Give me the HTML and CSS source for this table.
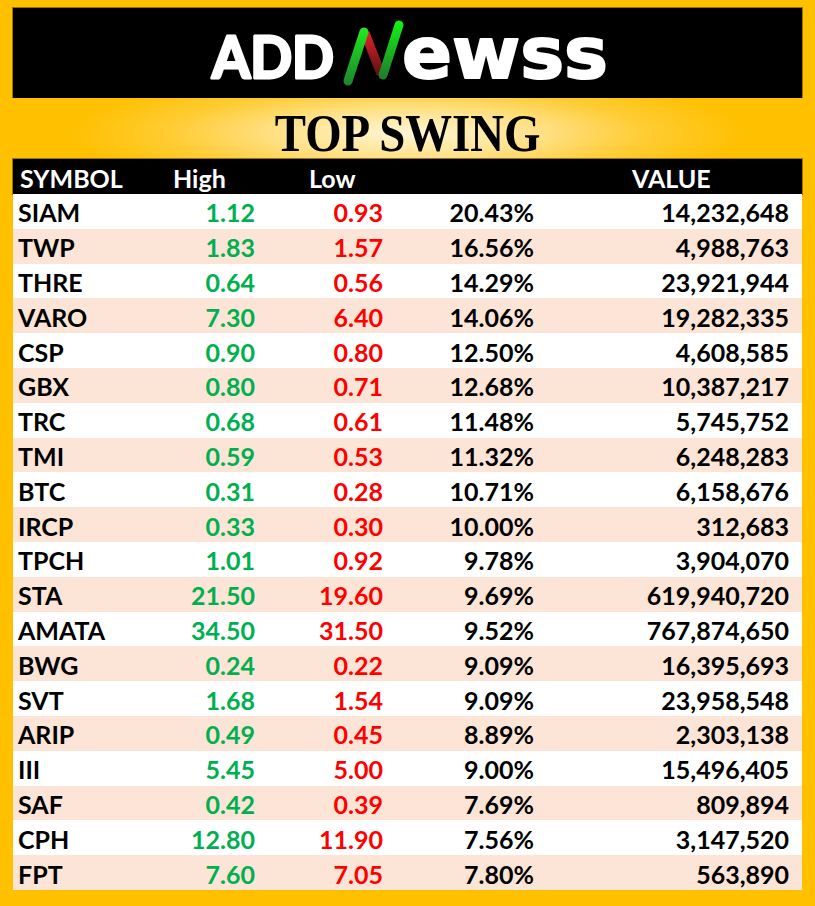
FILE: index.html
```html
<!DOCTYPE html>
<html lang="en">
<head>
<meta charset="utf-8">
<title>Top Swing</title>
<link rel="stylesheet" href="styles.css">
</head>
<body>
<div class="frame">
  <div class="logo">
    <svg class="logo-svg" width="789" height="90" viewBox="0 0 789 90" xmlns="http://www.w3.org/2000/svg">
      <defs>
        <linearGradient id="g1" gradientUnits="userSpaceOnUse" x1="0" y1="22" x2="0" y2="74">
          <stop offset="0" stop-color="#1ee81e"/>
          <stop offset="1" stop-color="#1c8a2c"/>
        </linearGradient>
        <linearGradient id="g2" gradientUnits="userSpaceOnUse" x1="0" y1="15" x2="0" y2="68">
          <stop offset="0" stop-color="#12f012"/>
          <stop offset="1" stop-color="#1f7f2a"/>
        </linearGradient>
        <linearGradient id="r1" gradientUnits="userSpaceOnUse" x1="0" y1="24" x2="0" y2="66">
          <stop offset="0" stop-color="#e3222a"/>
          <stop offset="1" stop-color="#5e1212"/>
        </linearGradient>
      </defs>
      <text class="logo-text" x="199" y="70" font-size="58" textLength="122" lengthAdjust="spacingAndGlyphs">ADD</text>
      <line x1="352" y1="25" x2="368" y2="66" stroke="url(#r1)" stroke-width="9"/>
      <line x1="335" y1="73" x2="351" y2="24" stroke="url(#g1)" stroke-width="9" stroke-linecap="round"/>
      <line x1="370" y1="67" x2="386" y2="17" stroke="url(#g2)" stroke-width="9" stroke-linecap="round"/>
      <text class="logo-text logo-low" x="389" y="70" font-size="72" textLength="206" lengthAdjust="spacingAndGlyphs">ewss</text>
    </svg>
  </div>
  <div class="title"><span class="title-text">TOP SWING</span></div>
  <div class="thead">
    <span>SYMBOL</span><span>High</span><span>Low</span><span>VALUE</span>
  </div>
  <div class="rows">
    <div class="row"><span class="sym">SIAM</span><span class="up">1.12</span><span class="dn">0.93</span><span>20.43%</span><span>14,232,648</span></div>
    <div class="row"><span class="sym">TWP</span><span class="up">1.83</span><span class="dn">1.57</span><span>16.56%</span><span>4,988,763</span></div>
    <div class="row"><span class="sym">THRE</span><span class="up">0.64</span><span class="dn">0.56</span><span>14.29%</span><span>23,921,944</span></div>
    <div class="row"><span class="sym">VARO</span><span class="up">7.30</span><span class="dn">6.40</span><span>14.06%</span><span>19,282,335</span></div>
    <div class="row"><span class="sym">CSP</span><span class="up">0.90</span><span class="dn">0.80</span><span>12.50%</span><span>4,608,585</span></div>
    <div class="row"><span class="sym">GBX</span><span class="up">0.80</span><span class="dn">0.71</span><span>12.68%</span><span>10,387,217</span></div>
    <div class="row"><span class="sym">TRC</span><span class="up">0.68</span><span class="dn">0.61</span><span>11.48%</span><span>5,745,752</span></div>
    <div class="row"><span class="sym">TMI</span><span class="up">0.59</span><span class="dn">0.53</span><span>11.32%</span><span>6,248,283</span></div>
    <div class="row"><span class="sym">BTC</span><span class="up">0.31</span><span class="dn">0.28</span><span>10.71%</span><span>6,158,676</span></div>
    <div class="row"><span class="sym">IRCP</span><span class="up">0.33</span><span class="dn">0.30</span><span>10.00%</span><span>312,683</span></div>
    <div class="row"><span class="sym">TPCH</span><span class="up">1.01</span><span class="dn">0.92</span><span>9.78%</span><span>3,904,070</span></div>
    <div class="row"><span class="sym">STA</span><span class="up">21.50</span><span class="dn">19.60</span><span>9.69%</span><span>619,940,720</span></div>
    <div class="row"><span class="sym">AMATA</span><span class="up">34.50</span><span class="dn">31.50</span><span>9.52%</span><span>767,874,650</span></div>
    <div class="row"><span class="sym">BWG</span><span class="up">0.24</span><span class="dn">0.22</span><span>9.09%</span><span>16,395,693</span></div>
    <div class="row"><span class="sym">SVT</span><span class="up">1.68</span><span class="dn">1.54</span><span>9.09%</span><span>23,958,548</span></div>
    <div class="row"><span class="sym">ARIP</span><span class="up">0.49</span><span class="dn">0.45</span><span>8.89%</span><span>2,303,138</span></div>
    <div class="row"><span class="sym">III</span><span class="up">5.45</span><span class="dn">5.00</span><span>9.00%</span><span>15,496,405</span></div>
    <div class="row"><span class="sym">SAF</span><span class="up">0.42</span><span class="dn">0.39</span><span>7.69%</span><span>809,894</span></div>
    <div class="row"><span class="sym">CPH</span><span class="up">12.80</span><span class="dn">11.90</span><span>7.56%</span><span>3,147,520</span></div>
    <div class="row"><span class="sym">FPT</span><span class="up">7.60</span><span class="dn">7.05</span><span>7.80%</span><span>563,890</span></div>
  </div>
</div>
</body>
</html>
```

FILE: styles.css
```css
* { box-sizing: border-box; }

html, body {
  margin: 0;
  padding: 0;
}

body {
  width: 815px;
  height: 906px;
  background: #ffc000;
  overflow: hidden;
  font-family: Lato, "Open Sans", sans-serif;
}

.frame {
  padding: 8px 13px 16px;
  display: flex;
  flex-direction: column;
}

.logo {
  height: 90px;
  background: #000;
  box-shadow: 0 0 0 1px #9a7500;
}

.logo-svg {
  display: block;
}

.logo-text {
  font-family: Lato, "Open Sans", sans-serif;
  font-weight: 700;
  fill: #fff;
  stroke: #fff;
  stroke-width: 3;
  stroke-linejoin: round;
}

.logo-low {
  font-family: "DejaVu Sans", Lato, sans-serif;
  stroke-width: 2;
}

.title {
  height: 61px;
  margin: 0 -13px;
  padding-top: 10px;
  display: flex;
  justify-content: center;
  align-items: center;
  background: radial-gradient(ellipse 340px 62px at 50% 58%, #fff6d6 0%, #ffe390 35%, #ffcc33 70%, #ffc000 100%);
}

.title-text {
  display: inline-block;
  font-family: "Liberation Serif", "Times New Roman", serif;
  font-weight: 700;
  font-size: 52px;
  color: #000;
  transform: scaleX(0.9);
}

.thead {
  height: 35px;
  background: #000;
  color: #fff;
  display: grid;
  grid-template-columns: 153px 136px 323px 1fr;
  align-items: center;
  padding-left: 7px;
  padding-top: 2px;
  font-weight: 700;
  font-size: 25px;
  box-shadow: 0 0 0 1px #9a7500;
}

.rows {
  height: 696px;
  display: grid;
  grid-template-rows: repeat(20, 1fr);
}

.row {
  display: grid;
  grid-template-columns: 147px 90px 128px 151px 255px;
  align-items: center;
  padding: 2px 13px 0 5px;
  background: #fff;
  font-weight: 700;
  font-size: 25px;
  color: #000;
  text-align: right;
}

.row:nth-child(even) {
  background: #fce4d6;
}

.row .sym {
  text-align: left;
}

.up { color: #00b050; }
.dn { color: #ff0000; }
```
